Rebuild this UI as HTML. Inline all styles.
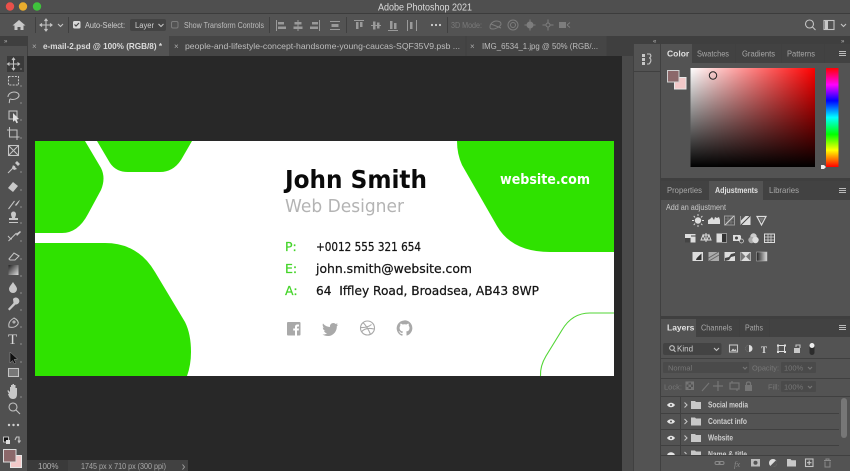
<!DOCTYPE html>
<html><head><meta charset="utf-8"><title>Adobe Photoshop 2021</title>
<style>
html,body{margin:0;padding:0;background:#282828;width:850px;height:471px;overflow:hidden}
svg{display:block;position:absolute;left:0;top:0;filter:blur(.35px)}
text{font-family:"Liberation Sans",sans-serif}
.u{font-size:8px;fill:#cfcfcf}
.d{fill:#777;font-size:7.5px}
.c{font-family:"DejaVu Sans",sans-serif;font-weight:bold}
.i{fill:none;stroke:#c4c4c4;stroke-width:1.1}
.f{fill:#c8c8c8}
.g{fill:#757575}
.s{fill:none;stroke:#757575;stroke-width:1.2}
.l{stroke:#404040;stroke-width:1}
.b{font-family:"DejaVu Sans",sans-serif;stroke-width:.25}
</style></head><body>
<svg width="850" height="471" viewBox="0 0 850 471" xmlns="http://www.w3.org/2000/svg">
<rect width="850" height="471" fill="#282828"/>
<!-- title bar -->
<rect width="850" height="13" fill="#4f4f4f"/>
<circle cx="10" cy="6.500" r="4.200" fill="#e9504a"/><circle cx="23" cy="6.500" r="4.200" fill="#e9ad2d"/><circle cx="37" cy="6.500" r="4.200" fill="#3fc23c"/>
<text x="425" y="10.500" text-anchor="middle" font-size="10" fill="#dcdcdc" textLength="94" lengthAdjust="spacingAndGlyphs">Adobe Photoshop 2021</text>
<!-- options bar -->
<rect y="13" width="850" height="23" fill="#535353"/><rect y="13" width="850" height="1" fill="#3c3c3c"/>
<path class="f" d="M19 20l6.500 5.500h-2v4.500h-3v-3h-3v3h-3v-4.500h-2z"/>
<path class="l" d="M35.500 17v16M68.500 17v16M269.500 17v16M346.500 17v16M447.500 17v16" stroke="#444"/>
<path class="i" d="M46 19v12M40 25h12M44.500 21l1.500-2 1.500 2M44.500 29l1.500 2 1.500-2M42 23.500l-2 1.500 2 1.500M50 23.500l2 1.500-2 1.500" stroke-width="1"/>
<path class="i" d="M58 24l2.500 2.500L63 24" stroke-width=".9"/>
<rect x="73" y="21" width="7.500" height="7.500" rx="1.500" fill="#d8d8d8"/><path d="M74.500 24.500l1.500 1.500 3-3" fill="none" stroke="#444" stroke-width="1.200"/>
<text class="u" x="85" y="28" textLength="40" lengthAdjust="spacingAndGlyphs">Auto-Select:</text>
<rect x="130" y="19" width="36" height="12" rx="2" fill="#434343"/>
<text class="u" x="135" y="28" textLength="19" lengthAdjust="spacingAndGlyphs">Layer</text>
<path class="i" d="M158.500 24l2.500 2.500 2.500-2.500" stroke-width=".9"/>
<rect x="171.500" y="21.500" width="6.500" height="6.500" rx="1.500" fill="none" stroke="#7d7d7d"/>
<text x="184" y="28" font-size="8" fill="#bdbdbd" textLength="80" lengthAdjust="spacingAndGlyphs">Show Transform Controls</text>
<g fill="#9a9a9a">
<path d="M276 20h1v11h-1zM278 22h6v2.500h-6zM278 26.500h8v2.500h-8z"/>
<path d="M297.500 20h1v11h-1zM294.500 22h7v2.500h-7zM293.500 26.500h9v2.500h-9z"/>
<path d="M319 20h1v11h-1zM312 22h6v2.500h-6zM310 26.500h8v2.500h-8z"/>
<path d="M330 21h10v1h-10zM330 29h10v1h-10zM331.500 24h7v3h-7z"/>
<path d="M354 20h10v1h-10zM356 22h2.500v7h-2.500zM360 22h2.500v5h-2.500z"/>
<path d="M371 25h10v1h-10zM373 21.500h2.500v8h-2.500zM377 22.500h2.500v6h-2.500z"/>
<path d="M388 30h10v1h-10zM390 21h2.500v8h-2.500zM394 23h2.500v6h-2.500z"/>
<path d="M407 20h1v11h-1zM416 20h1v11h-1zM410 22h2.500v7h-2.500z"/>
</g>
<g fill="#d0d0d0"><circle cx="432" cy="25" r="1.100"/><circle cx="436" cy="25" r="1.100"/><circle cx="440" cy="25" r="1.100"/></g>
<text x="451" y="28" font-size="8" fill="#7a7a7a" textLength="31" lengthAdjust="spacingAndGlyphs">3D Mode:</text>
<g fill="none" stroke="#7d7d7d" stroke-width="1">
<path d="M490 27c0-4 4-6 6-6 3 0 5 1 5 3s-5 5-8 5-3-1-3-2zM491 24l10 4"/>
<circle cx="513" cy="25" r="5"/><circle cx="513" cy="25" r="2.500"/>
<path d="M530 19.500v11M524.500 25h11"/><circle cx="530" cy="25" r="3" fill="#7d7d7d"/>
<path d="M548 19.500v3M548 27.500v3M542.500 25h3M550.500 25h3"/><circle cx="548" cy="25" r="2"/>
</g>
<path fill="#7d7d7d" d="M559 22h7v6h-7z"/>
<path d="M567 25l3-2.500M567 25l3 2.500" fill="none" stroke="#7d7d7d"/>
<circle cx="809.500" cy="24" r="4" class="i"/><path class="i" d="M812.500 27l3 3"/>
<rect x="824" y="20.500" width="10" height="9" class="i"/><path class="f" d="M825 21h3v8h-3z"/>
<path class="i" d="M841 24l2.500 2.500 2.500-2.500" stroke-width=".9"/>
<!-- tab bar -->
<rect y="36" width="850" height="20" fill="#3f3f3f"/>
<rect x="28" y="36" width="141" height="20" fill="#535353"/>
<rect x="169" y="36" width="297" height="20" fill="#454545"/>
<rect x="466.500" y="36" width="140" height="20" fill="#454545"/>
<path class="l" d="M466 36v20" stroke="#3a3a3a"/>
<text x="32" y="49" font-size="8" fill="#aaa">×</text>
<text x="43" y="49" font-size="8.500" font-weight="bold" fill="#dcdcdc" textLength="119" lengthAdjust="spacingAndGlyphs">e-mail-2.psd @ 100% (RGB/8) *</text>
<text x="174" y="49" font-size="8" fill="#aaa">×</text>
<text x="185" y="49" font-size="8.500" fill="#bdbdbd" textLength="275" lengthAdjust="spacingAndGlyphs">people-and-lifestyle-concept-handsome-young-caucas-SQF35V9.psb ...</text>
<text x="470" y="49" font-size="8" fill="#aaa">×</text>
<text x="482" y="49" font-size="8.500" fill="#bdbdbd" textLength="116" lengthAdjust="spacingAndGlyphs">IMG_6534_1.jpg @ 50% (RGB/...</text>
<!-- left toolbar -->
<rect x="0" y="36" width="27" height="435" fill="#505050"/>
<rect x="0" y="36" width="27" height="10" fill="#3f3f3f"/>
<text x="4" y="43" font-size="6" fill="#bbb">»</text>
<rect x="7" y="56" width="17" height="16" fill="#3a3a3a"/>
<g fill="none" stroke="#c4c4c4" stroke-width="1.050">
<path d="M13.500 58v12M7.500 64h12M12 60l1.500-2 1.500 2M12 68l1.500 2 1.500-2M9.500 62.500l-2 1.500 2 1.500M17.500 62.500l2 1.500-2 1.500"/>
<rect x="8.500" y="76.500" width="10" height="8.500" stroke-dasharray="2 1.200"/>
<path d="M8 97c0-3 3-5 6-5s5 1.500 5 3.500-3 4-6 4c-1 0-2-.2-3-.7M10 99c-1 1 0 3-1 4"/>
<rect x="9" y="111" width="8" height="8"/>
<path d="M9.500 127v10h10M7 130h10v10"/>
<rect x="8.500" y="145.500" width="10" height="10"/><path d="M8.500 145.500l10 10M18.500 145.500l-10 10"/>
<path d="M8 173l7-7"/>
<path d="M8.500 209l6-8"/>
<path d="M8.500 241l8-8M12 239c-2 0-3-2-4-3"/>
<path d="M9 259l5-6 5 3-4 4h-5z"/>
<path d="M9 327c-1-5 2-7 5-9 2 1 5 3 4 6-2 3-5 4-9 3z"/><circle cx="14" cy="322" r="1"/>
<circle cx="13" cy="407" r="4"/><path d="M16 410l4 4"/>
<rect x="8.500" y="368.500" width="10" height="8" fill="#777"/>
</g>
<path d="M13 113l6 6-2.500.5 1.500 3-1.500.7-1.500-3-2 1.500z" fill="#e0e0e0"/>
<path class="f" d="M15 163l2-2 3 3-2 2zM13 165l4 4-3 1-2-2z"/>
<path class="f" d="M8 188l5-6 5 4-5 6z"/>
<path class="f" d="M15 205c2-2 3-4 5-5-1 2-2 4-4 6z"/>
<path class="f" d="M11 214a2.500 2.500 0 1 1 5 0c0 2-1 3-1 4h3v2h-9v-2h3c0-1-1-2-1-4zM9 222h9v1h-9z"/>
<path class="f" d="M16 234l4-3 1 1-4 4z"/>
<defs><linearGradient id="gr" x1="0" x2="1" y1="0" y2="1"><stop offset="0" stop-color="#222"/><stop offset="1" stop-color="#ddd"/></linearGradient>
<linearGradient id="h" x1="0" x2="0" y1="0" y2="1"><stop offset="0" stop-color="#f00"/><stop offset=".17" stop-color="#f0f"/><stop offset=".33" stop-color="#00f"/><stop offset=".5" stop-color="#0ff"/><stop offset=".67" stop-color="#0f0"/><stop offset=".83" stop-color="#ff0"/><stop offset="1" stop-color="#f00"/></linearGradient>
<linearGradient id="s1" x1="0" x2="1"><stop offset="0" stop-color="#fff"/><stop offset="1" stop-color="#f00"/></linearGradient>
<linearGradient id="s2" x1="0" x2="0" y1="0" y2="1"><stop offset="0" stop-color="#000" stop-opacity="0"/><stop offset="1" stop-color="#000"/></linearGradient>
<linearGradient id="gb" x1="0" x2="1"><stop offset="0" stop-color="#222"/><stop offset="1" stop-color="#ddd"/></linearGradient></defs>
<rect x="8.500" y="265" width="10" height="10" fill="url(#gr)"/>
<path class="f" d="M13 282c2 3 4 5 4 7a4 4 0 0 1-8 0c0-2 2-4 4-7z"/>
<path class="f" d="M13 299a3.500 3.500 0 1 1 2.500 5.500l-6 6-1.500-1.500 5.500-6z"/>
<text x="8" y="344" font-size="15" fill="#d8d8d8" style="font-family:'Liberation Serif',serif">T</text>
<path d="M10 352l0 11 2.500-2.500 2 3.500 1.500-1-2-3.500 3.500-.5z" fill="#111" stroke="#aaa" stroke-width=".4"/>
<path class="f" d="M9 394c-1-2-2-3-1-4l2 2v-5h1v3-5h1.500v5-6h1.500v6-5h1.500v6-3h1.500v6c0 3-1 5-4 5s-4-2-5-5z"/>
<g fill="#d0d0d0"><circle cx="9" cy="425" r="1.200"/><circle cx="13.500" cy="425" r="1.200"/><circle cx="18" cy="425" r="1.200"/></g>
<rect x="3.500" y="437" width="5" height="5" fill="#111" stroke="#ddd" stroke-width=".8"/><rect x="6" y="440" width="4" height="4" fill="#ddd"/>
<path class="i" d="M16 437h3v5M15 440l1.500-3M18 440.500l1 2 1.500-2" stroke-width=".8"/>
<rect x="10.500" y="455.500" width="11" height="12" fill="#f3c9c9" stroke="#e8e8e8"/>
<rect x="3.500" y="449.500" width="12.500" height="12.500" fill="#8c686a" stroke="#dcdcdc"/>
<!-- tick marks for tools -->
<g fill="#bbb"><circle cx="21" cy="69" r=".6"/><circle cx="21" cy="86" r=".6"/><circle cx="21" cy="103" r=".6"/><circle cx="21" cy="120" r=".6"/><circle cx="21" cy="138" r=".6"/><circle cx="21" cy="172" r=".6"/><circle cx="21" cy="190" r=".6"/><circle cx="21" cy="207" r=".6"/><circle cx="21" cy="223" r=".6"/><circle cx="21" cy="241" r=".6"/><circle cx="21" cy="259" r=".6"/><circle cx="21" cy="276" r=".6"/><circle cx="21" cy="293" r=".6"/><circle cx="21" cy="310" r=".6"/><circle cx="21" cy="327" r=".6"/><circle cx="21" cy="344" r=".6"/><circle cx="21" cy="362" r=".6"/><circle cx="21" cy="379" r=".6"/><circle cx="21" cy="397" r=".6"/></g>
<!-- status bar -->
<rect x="27" y="460" width="41" height="11" fill="#3a3a3a"/><rect x="68" y="460" width="120" height="11" fill="#414141"/>
<text x="38" y="469" font-size="8" fill="#b0b0b0">100%</text>
<text x="81" y="469" font-size="8" fill="#a8a8a8" textLength="85" lengthAdjust="spacingAndGlyphs">1745 px x 710 px (300 ppi)</text>
<path d="M182.500 464.500l2 2.500-2 2.500" fill="none" stroke="#aaa" stroke-width=".8"/>
<!-- card -->
<rect x="35" y="141" width="579" height="235" fill="#fff"/>
<g fill="#2fe200">
<path d="M35 141H85L101 168Q106 178 101 190L88 214Q78 233 62 233H35Z"/>
<path d="M97 141L110 163Q116 172 128 172H160Q173 172 181 160L192 141Z"/>
<path d="M35 243H105Q138 243 155 272L185 322Q191 334 191 352Q191 365 187 376H35Z"/>
<path d="M457 141Q457 154 462 165L497 226Q512 252 550 252H614V141Z"/>
</g>
<path d="M540.500 376Q540 366 546 356L562 330Q572 313 590 313H614" fill="none" stroke="#52d635" stroke-width="1.100"/>
<text class="c" x="285" y="188" font-size="25" fill="#0a0a0a" textLength="142" lengthAdjust="spacingAndGlyphs">John Smith</text>
<text x="285" y="212" font-size="18" fill="#b4b4b4" style="font-family:'DejaVu Sans',sans-serif" textLength="119" lengthAdjust="spacingAndGlyphs">Web Designer</text>
<text class="c" x="500" y="184" font-size="14" fill="#fff" textLength="90" lengthAdjust="spacingAndGlyphs">website.com</text>
<g font-size="12.500">
<text class="b" x="285" y="251" fill="#45d42a" stroke="#45d42a">P:</text>
<text class="b" x="285" y="273" fill="#45d42a" stroke="#45d42a">E:</text>
<text class="b" x="285" y="295" fill="#45d42a" stroke="#45d42a">A:</text>
<text class="b" x="316" y="251" fill="#151515" stroke="#151515" textLength="105" lengthAdjust="spacingAndGlyphs">+0012 555 321 654</text>
<text class="b" x="316" y="273" fill="#151515" stroke="#151515" textLength="156" lengthAdjust="spacingAndGlyphs">john.smith@website.com</text>
<text class="b" x="316" y="295" xml:space="preserve" fill="#151515" stroke="#151515" textLength="223" lengthAdjust="spacingAndGlyphs">64  Iffley Road, Broadsea, AB43 8WP</text>
</g>
<!-- social -->
<rect x="287" y="322" width="13.500" height="13.500" rx="1" fill="#a9a9a9"/>
<path d="M295 335.500v-5h-1.800v-2H295v-1.500c0-1.800 1-2.500 2.500-2.500h1.500v2h-1c-.7 0-1 .3-1 1v1h2l-.3 2H297v5z" fill="#fff"/>
<path fill="#a9a9a9" d="M323 323.500c2 2.200 4 3.300 7 3.500-.4-2.500 1.500-4 3.300-4 1 0 1.800.4 2.300 1l2-.8-1 1.800 1.700-.4-1.500 1.600c.2 5-3.500 9.800-9 9.800-2 0-3.800-.5-5.300-1.500 1.700.1 3.200-.3 4.500-1.300-1.500-.1-2.600-1-3-2.300h1.400c-1.600-.5-2.600-1.800-2.600-3.400l1.400.4c-1.400-1-1.900-3-1.200-4.400z"/>
<g fill="none" stroke="#a9a9a9" stroke-width="1.100"><circle cx="367.500" cy="328" r="7"/><path d="M363 322.500c3 3 6 8 7.500 12M360.500 327.500c4 .2 8-.5 11-3M361.500 332c2-3 6-4.500 12.500-3"/></g>
<path fill="#a9a9a9" fill-rule="evenodd" d="M404.500 320.500a7.800 7.800 0 0 0-2.500 15.200c.4.100.5-.2.500-.4v-1.400c-2.200.5-2.600-1-2.600-1-.4-.9-.9-1.200-.9-1.200-.7-.5.100-.5.100-.5.800.1 1.200.8 1.200.8.700 1.200 1.800.9 2.300.7.100-.5.300-.9.500-1.100-1.700-.2-3.500-.9-3.500-3.800 0-.8.300-1.500.8-2.100-.1-.2-.4-1 .1-2 0 0 .7-.2 2.100.8a7.500 7.500 0 0 1 3.900 0c1.500-1 2.100-.8 2.100-.8.400 1 .2 1.800.1 2 .5.600.8 1.300.8 2.100 0 3-1.800 3.600-3.500 3.800.3.200.5.700.5 1.400v2.100c0 .2.100.5.500.4a7.800 7.800 0 0 0-2.500-15.200z"/>
<!-- right dock -->
<rect x="627" y="36" width="223" height="435" fill="#3f3f3f"/>
<rect x="622" y="56" width="11" height="415" fill="#4a4a4a"/>
<rect x="633" y="44" width="28" height="427" fill="#535353"/>
<path class="l" d="M633.500 44v427M660.500 44v427"/>
<path class="l" d="M633 71.500h28"/>
<text x="653" y="43" font-size="6" fill="#bbb">«</text><text x="841" y="43" font-size="6" fill="#bbb">»</text>
<path class="f" d="M642 54h3v3h-3zM642 58h3v3h-3zM642 62h3v3h-3z"/>
<path class="i" d="M647 54h3c2 2 0 4-1 4 2 0 3 3 0 6h-2" stroke-width="1"/>
<!-- colour panel -->
<rect x="661" y="44" width="189" height="134" fill="#535353"/>
<rect x="661" y="44" width="189" height="19" fill="#424242"/>
<rect x="661" y="44" width="31" height="19" fill="#535353"/>
<path class="l" d="M735.500 44v19M781.500 44v19M824.500 44v19" stroke="#3a3a3a"/>
<text x="667" y="56.500" font-size="8.500" font-weight="bold" fill="#e2e2e2">Color</text>
<text x="697" y="56.500" font-size="8.500" fill="#a8a8a8" textLength="32" lengthAdjust="spacingAndGlyphs">Swatches</text>
<text x="742" y="56.500" font-size="8.500" fill="#a8a8a8" textLength="33" lengthAdjust="spacingAndGlyphs">Gradients</text>
<text x="787" y="56.500" font-size="8.500" fill="#a8a8a8" textLength="28" lengthAdjust="spacingAndGlyphs">Patterns</text>
<path d="M839 51.500h7M839 53.500h7M839 55.500h7" stroke="#bbb" stroke-width="1"/>
<rect x="674.500" y="77.500" width="11.500" height="11.500" fill="#f3c9c9" stroke="#e8e8e8"/>
<rect x="667.500" y="70.500" width="11.500" height="11.500" fill="#8c686a" stroke="#cfcfcf"/>
<rect x="690.500" y="68" width="124.500" height="99" fill="url(#s1)"/><rect x="690.500" y="68" width="124.500" height="99" fill="url(#s2)"/>
<circle cx="713" cy="75.500" r="3.700" fill="none" stroke="#222" stroke-width="1"/>
<rect x="826" y="68" width="12.500" height="99" fill="url(#h)"/>
<path d="M821 165h3l2 2-2 2h-3z" fill="#eee"/>
<rect x="661" y="178" width="189" height="3" fill="#3f3f3f"/>
<!-- adjustments panel -->
<rect x="661" y="181" width="189" height="135" fill="#535353"/>
<rect x="661" y="181" width="189" height="19" fill="#424242"/>
<rect x="709" y="181" width="54" height="19" fill="#535353"/>
<text x="667" y="193" font-size="8.500" fill="#a8a8a8" textLength="35" lengthAdjust="spacingAndGlyphs">Properties</text>
<text x="715" y="193" font-size="8.500" font-weight="bold" fill="#e2e2e2" textLength="43" lengthAdjust="spacingAndGlyphs">Adjustments</text>
<text x="769" y="193" font-size="8.500" fill="#a8a8a8" textLength="30" lengthAdjust="spacingAndGlyphs">Libraries</text>
<path d="M839 188.500h7M839 190.500h7M839 192.500h7" stroke="#bbb" stroke-width="1"/>
<text x="666" y="210" font-size="8" fill="#c8c8c8" textLength="60" lengthAdjust="spacingAndGlyphs">Add an adjustment</text>
<circle cx="698" cy="220.500" r="3.200" fill="#ddd"/>
<path d="M698 214v2M698 225v2M692 220.500h2M702 220.500h2M693.700 216l1.400 1.400M701 223.700l1.400 1.400M693.700 225l1.400-1.400M701 217.400l1.400-1.400" stroke="#ddd" stroke-width=".9"/>
<path fill="#ddd" d="M708 224v-4l2-1 2-2 2 3 1-3 2 1 2-1 1 3v4z"/>
<rect x="724.500" y="216" width="10" height="9" fill="none" stroke="#999"/><path d="M724.500 219h10M724.500 222h10M728 216v9M731 216v9" stroke="#888" stroke-width=".6"/><path d="M725 225l9-9" stroke="#ccc"/>
<rect x="740.500" y="216" width="10" height="9" fill="#ddd"/><path d="M741 225l9-9" stroke="#444"/><path d="M741 216h4.500l-4.500 4.500z" fill="#555"/>
<path d="M757 216.500h9l-4.500 8.500z" fill="none" stroke="#ddd" stroke-width="1.200"/><path d="M759 218h5l-2.500 4z" fill="#777"/>
<rect x="685" y="234" width="10.500" height="8.500" fill="#ddd"/><path d="M685 238h5.500v4.500H685z" fill="#444"/><path d="M691 236h4.500" stroke="#444"/>
<path d="M706 233v9M703 235h6" stroke="#ddd"/><path d="M701 240l2-5 2 5zM707 240l2-5 2 5z" fill="none" stroke="#ddd"/>
<rect x="716.500" y="233.500" width="10.500" height="9" fill="#ddd"/><rect x="722" y="234" width="4.500" height="8" fill="#333"/>
<path d="M733 235h7l1 1v5h-8z" fill="#ddd"/><circle cx="736.500" cy="238" r="1.500" fill="#444"/><circle cx="741.500" cy="241" r="2" fill="#535353" stroke="#ddd" stroke-width=".7"/>
<circle cx="753.500" cy="236.500" r="3.200" fill="#ccc"/><circle cx="751.500" cy="240" r="3.200" fill="#aaa"/><circle cx="755.500" cy="240" r="3.200" fill="#ddd"/>
<rect x="764.500" y="234" width="10" height="8.500" fill="none" stroke="#ddd"/><path d="M764.500 237h10M764.500 240h10M768 234v8M771 234v8" stroke="#ddd" stroke-width=".7"/>
<rect x="692.500" y="252" width="10.500" height="9" fill="#ddd"/><path d="M696 260c0-2 4-5 5.500-6.500v6.500z" fill="#333"/>
<rect x="708.500" y="252" width="10.500" height="9" fill="#aaa"/><path d="M708.500 258l10-6M709 261l10-6" stroke="#666"/>
<rect x="724.500" y="252" width="10.500" height="9" fill="#ddd"/><path d="M725 258l4-1 2-3 4-1v3l-4 1-2 3-4 1z" fill="#444"/>
<rect x="740.500" y="252" width="10.500" height="9" fill="#ddd"/><path d="M741 252l4.500 4.500-4.500 4.500zM750.500 252l-4.500 4.500 4.500 4.500z" fill="#777"/>
<rect x="756.500" y="252" width="10.500" height="9" fill="url(#gb)" stroke="#bbb" stroke-width=".5"/>
<rect x="661" y="316" width="189" height="3" fill="#3f3f3f"/>
<!-- layers panel -->
<rect x="661" y="319" width="189" height="152" fill="#535353"/>
<rect x="661" y="319" width="189" height="18" fill="#424242"/>
<rect x="661" y="319" width="35" height="18" fill="#535353"/>
<path class="l" d="M739.500 319v18M769.500 319v18" stroke="#3a3a3a"/>
<text x="667" y="330.500" font-size="8.500" font-weight="bold" fill="#e2e2e2">Layers</text>
<text x="701" y="330.500" font-size="8.500" fill="#a8a8a8" textLength="31" lengthAdjust="spacingAndGlyphs">Channels</text>
<text x="745" y="330.500" font-size="8.500" fill="#a8a8a8" textLength="18" lengthAdjust="spacingAndGlyphs">Paths</text>
<path d="M839 325.500h7M839 327.500h7M839 329.500h7" stroke="#bbb" stroke-width="1"/>
<rect x="663" y="343" width="58.500" height="12" rx="2" fill="#434343"/>
<circle cx="672" cy="348" r="2.300" class="i" stroke-width=".9"/><path class="i" d="M673.500 349.800l2 2" stroke-width=".9"/>
<text x="677" y="351.500" font-size="8" fill="#cfcfcf">Kind</text>
<path class="i" d="M714 348l2.500 2.500 2.500-2.500" stroke-width=".8"/>
<rect x="729.500" y="345" width="8" height="7" class="i"/><path class="f" d="M731 351l2-2.500 1.500 1.500 1-1 1 2z"/>
<circle cx="749" cy="348.500" r="3.500" fill="#ddd"/><path d="M749 345a3.500 3.500 0 0 0 0 7z" fill="#555"/>
<text x="761" y="353" font-size="9" font-weight="bold" fill="#ddd" style="font-family:'Liberation Serif',serif">T</text>
<rect x="778" y="345.500" width="6.500" height="6" fill="none" stroke="#ddd"/><rect x="777" y="344.500" width="2" height="2" fill="#ddd"/><rect x="784" y="344.500" width="2" height="2" fill="#ddd"/><rect x="777" y="351" width="2" height="2" fill="#ddd"/><rect x="784" y="351" width="2" height="2" fill="#ddd"/>
<path class="f" d="M794 348h6v5h-6z"/><path class="i" d="M796 347v-2h4v3" stroke-width=".9"/>
<rect x="809.500" y="343" width="5" height="12" rx="2.500" fill="#2c2c2c"/><circle cx="812" cy="345.500" r="2.500" fill="#eee"/>
<path class="l" d="M661 358.500h189M661 378.500h189M661 396.500h189" stroke="#444"/>
<rect x="663" y="362" width="86" height="11" rx="1" fill="#4a4a4a"/>
<text x="668" y="370.500" class="d">Normal</text><path class="s" d="M743 367l2 2 2-2" stroke-width=".8"/>
<text x="752" y="370.500" class="d" textLength="27" lengthAdjust="spacingAndGlyphs">Opacity:</text>
<rect x="781" y="362" width="35" height="11" rx="1" fill="#4a4a4a"/><text x="784" y="370.500" class="d">100%</text><path class="s" d="M808 367l2 2 2-2" stroke-width=".8"/>
<text x="664" y="389.500" class="d">Lock:</text>
<rect x="686" y="382" width="7.500" height="7.500" fill="none" stroke="#777"/><path d="M686 382h2.500v2.500H686zM691 382h2.500v2.500H691zM688.500 384.500h2.500v2.500h-2.500zM686 387h2.500v2.500H686zM691 387h2.500v2.500H691z" class="g"/>
<path class="s" d="M702 391l7-8"/>
<path class="s" d="M718 381v10M713 386h10"/>
<rect x="730" y="383" width="9" height="6" class="s"/><path class="s" d="M732 383v-2M737 389v2"/>
<path class="g" d="M745 385h7v6h-7z"/><path class="s" d="M746.500 385v-1.500c0-2 4-2 4 0v1.500"/>
<text x="768" y="389.500" class="d">Fill:</text>
<rect x="781" y="381" width="35" height="11" rx="1" fill="#4a4a4a"/><text x="784" y="389.500" class="d">100%</text><path class="s" d="M808 386l2 2 2-2" stroke-width=".8"/>
<!-- rows -->
<path class="l" d="M661 413.500h178M661 429.500h178M661 445.500h178M680.500 397v58" stroke="#444"/>
<g fill="#e4e4e4">
<path d="M667 405c2-3 6-3 8 0-2 3-6 3-8 0z"/><path d="M667 421.500c2-3 6-3 8 0-2 3-6 3-8 0z"/><path d="M667 438c2-3 6-3 8 0-2 3-6 3-8 0z"/><path d="M667 454.500c2-3 6-3 8 0l-1 .5h-6z"/>
</g>
<g fill="#535353"><circle cx="671" cy="405" r="1"/><circle cx="671" cy="421.500" r="1"/><circle cx="671" cy="438" r="1"/></g>
<path class="i" d="M684.500 402.500l2.500 2.500-2.500 2.500M684.500 419l2.500 2.500-2.500 2.500M684.500 435.500l2.500 2.500-2.500 2.500M684.500 452l2 2" stroke-width=".8"/>
<path class="f" d="M691 401h4l1 1h5v7h-10zM691 417.500h4l1 1h5v7h-10zM691 434h4l1 1h5v7h-10zM691 450.500h4l1 1h5v3.500h-10z"/>
<text x="708" y="407.500" font-size="8" font-weight="bold" fill="#cfcfcf" textLength="40" lengthAdjust="spacingAndGlyphs">Social media</text>
<text x="708" y="424" font-size="8" font-weight="bold" fill="#cfcfcf" textLength="39" lengthAdjust="spacingAndGlyphs">Contact info</text>
<text x="708" y="440.500" font-size="8" font-weight="bold" fill="#cfcfcf" textLength="25" lengthAdjust="spacingAndGlyphs">Website</text>
<text x="708" y="457" font-size="8" font-weight="bold" fill="#cfcfcf" textLength="39" lengthAdjust="spacingAndGlyphs">Name &amp; title</text>
<rect x="841" y="398" width="6" height="40" rx="3" fill="#777"/>
<rect x="661" y="455" width="189" height="16" fill="#535353"/><path class="l" d="M661 455.500h189" stroke="#444"/>
<g fill="none" stroke="#8a8a8a" stroke-width="1"><rect x="715" y="461.500" width="5" height="3" rx="1.500"/><rect x="719" y="461.500" width="5" height="3" rx="1.500"/></g>
<text x="734" y="467" font-size="8.500" font-style="italic" fill="#8a8a8a" style="font-family:'Liberation Serif',serif">fx</text>
<rect x="751" y="459" width="9" height="7.500" fill="#bbb"/><circle cx="755.500" cy="462.700" r="2" fill="#535353"/>
<circle cx="773" cy="463" r="4" fill="#ddd"/><path d="M773 459a4 4 0 0 0-3 6.700l6-6A4 4 0 0 0 773 459z" fill="#555" transform="rotate(180 773 463)"/>
<path class="f" d="M787 459h3.500l1 1.200h4.500v6.300h-9z"/>
<rect x="805.500" y="459" width="7.500" height="7.500" class="i" stroke-width="1"/><path class="i" d="M807 462.700h4.500M809.200 460.500v4.500" stroke-width=".8"/>
<path d="M824 460.500h7M826 460v-1h3v1M825 461.500v5.500h5v-5.500" fill="none" stroke="#8a8a8a" stroke-width="1"/>
</svg>
</body></html>
